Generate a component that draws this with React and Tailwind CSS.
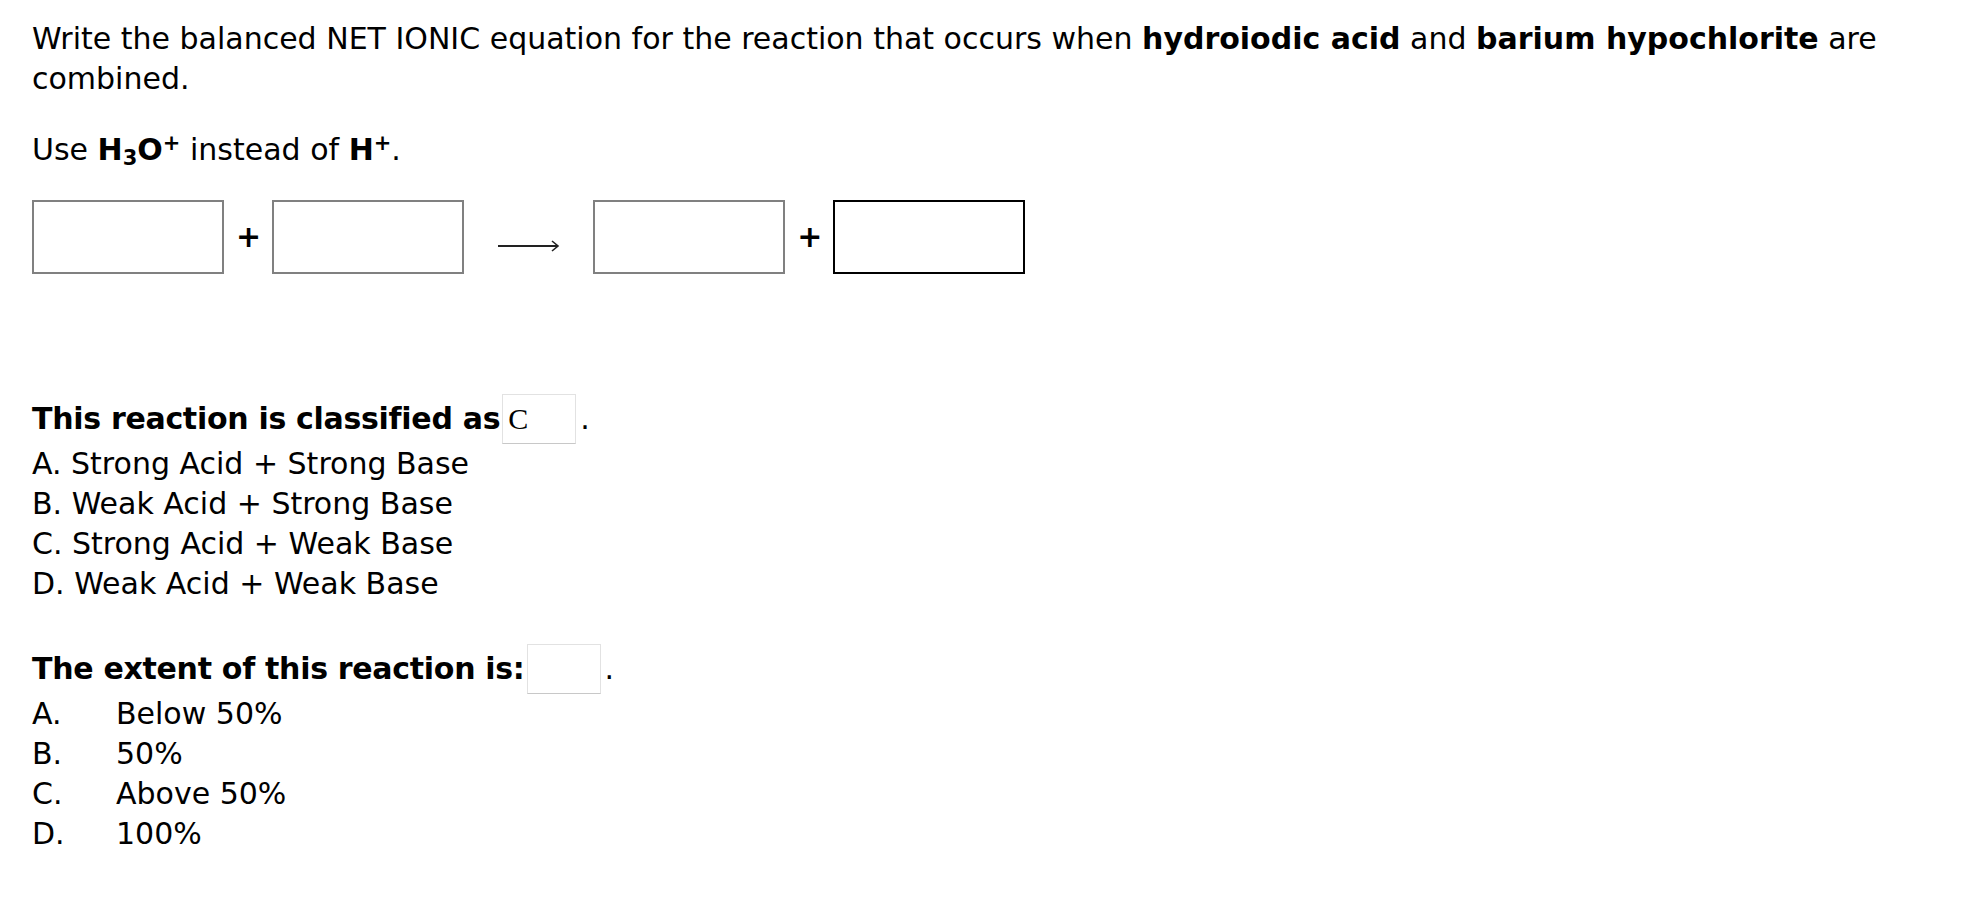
import React from 'react';

const font = { fontFamily: '"DejaVu Sans", Verdana, sans-serif' };

const AnswerBox = ({ dark }) => (
    <div className={`w-[192px] h-[74px] bg-white border-2 ${dark ? 'border-black' : 'border-[#808080]'}`} />
);

const Plus = () => <span className="font-bold text-[30px] leading-none ml-[12px] mr-[11px]">+</span>;

const Arrow = () => (
    <svg width="62" height="14" viewBox="0 0 62 14" className="ml-[34px] mr-[33px] mt-[18px]">
        <line x1="0" y1="7" x2="60" y2="7" stroke="#222" strokeWidth="2" />
        <path d="M54 2 L60 7 L54 12" fill="none" stroke="#222" strokeWidth="1.6" />
    </svg>
);

const Blank = ({ value, width }) => (
    <span className={`inline-flex items-center h-[50px] ${width} border border-[#e2e2e2] border-b-[#c8c8c8] bg-white px-[5px] align-middle ml-[2px]`}>
        <span className="text-[30px] font-normal" style={{ fontFamily: '"Liberation Serif", serif' }}>{value}</span>
    </span>
);

export default function App() {
    const classes = [
        'A. Strong Acid + Strong Base',
        'B. Weak Acid + Strong Base',
        'C. Strong Acid + Weak Base',
        'D. Weak Acid + Weak Base',
    ];

    const extent = [
        ['A.', 'Below 50%'],
        ['B.', '50%'],
        ['C.', 'Above 50%'],
        ['D.', '100%'],
    ];

    return (
        <div className="min-h-screen bg-white text-black pl-[32px] pr-[32px] pt-[19px] text-[30px] leading-[40px]" style={font}>
            {/* question */}
            <p>
                Write the balanced NET IONIC equation for the reaction that occurs when <b>hydroiodic acid</b> and{' '}
                <b>barium hypochlorite</b> are combined.
            </p>
            <p className="mt-[31px]">
                Use <b>H<sub className="text-[21px]">3</sub>O<sup className="text-[21px]">+</sup></b> instead of{' '}
                <b>H<sup className="text-[21px]">+</sup></b>.
            </p>

            {/* equation row */}
            <div className="flex items-center mt-[30px]">
                <AnswerBox />
                <Plus />
                <AnswerBox />
                <Arrow />
                <AnswerBox />
                <Plus />
                <AnswerBox dark />
            </div>

            {/* classification */}
            <div className="mt-[120px]">
                <div className="flex items-center h-[50px]">
                    <b className="tracking-[-0.3px]">This reaction is classified as</b>
                    <Blank value="C" width="w-[74px]" />
                    <span className="ml-[4px]">.</span>
                </div>
                {classes.map((c) => (
                    <div key={c}>{c}</div>
                ))}
            </div>

            {/* extent */}
            <div className="mt-[40px]">
                <div className="flex items-center h-[50px]">
                    <b className="tracking-[-0.3px]">The extent of this reaction is:</b>
                    <Blank value="" width="w-[74px]" />
                    <span className="ml-[4px]">.</span>
                </div>
                {extent.map(([k, v]) => (
                    <div key={k} className="grid grid-cols-[84px_1fr]">
                        <span>{k}</span>
                        <span>{v}</span>
                    </div>
                ))}
            </div>
        </div>
    );
}
